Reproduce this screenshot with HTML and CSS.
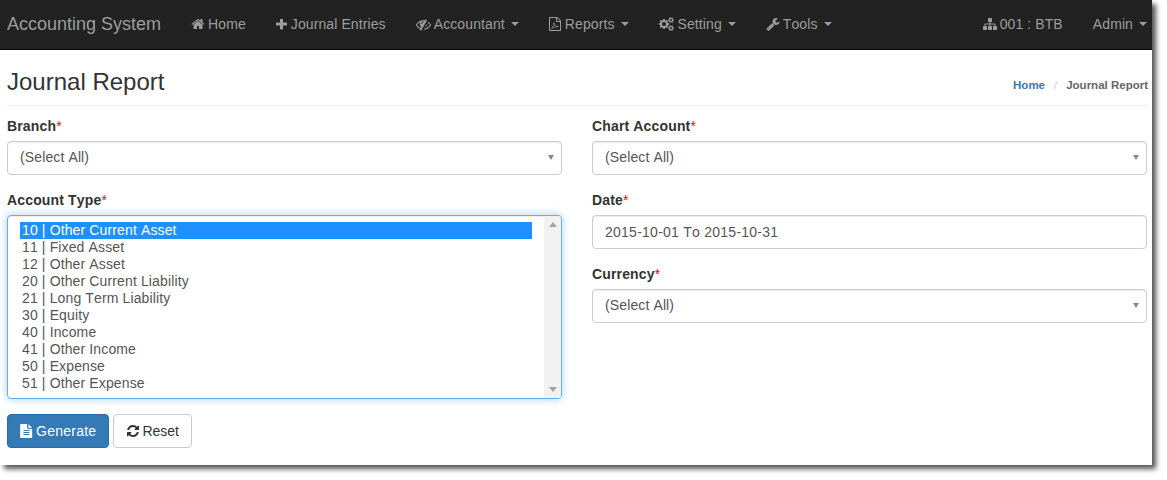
FILE: index.html
```html
<!DOCTYPE html>
<html lang="en">
<head>
    <meta charset="UTF-8">
    <title>Journal Report</title>
    <link rel="stylesheet" href="styles.css">
</head>
<body>
<div class="window">
    <nav class="navbar">
        <a class="brand" href="#">Accounting System</a>
        <ul class="nav">
            <li><a href="#"><svg class="fa" viewBox="0 0 1792 1792"><path d="M1472 992v480q0 26-19 45t-45 19h-384v-384h-256v384h-384q-26 0-45-19t-19-45v-480q0-1 .5-3t.5-3l575-474 575 474q1 2 1 6zm223-69l-62 74q-8 9-21 11h-3q-13 0-21-7l-692-577-692 577q-12 8-24 7-13-2-21-11l-62-74q-8-10-7-23.5t11-21.5l719-599q32-26 76-26t76 26l244 204v-195q0-14 9-23t23-9h192q14 0 23 9t9 23v408l219 182q10 8 11 21.5t-7 23.5z"/></svg>Home</a></li>
            <li><a href="#"><svg class="fa fa-plus" viewBox="192 192 1408 1408"><path d="M1600 736v192q0 40-28 68t-68 28h-416v416q0 40-28 68t-68 28h-192q-40 0-68-28t-28-68v-416h-416q-40 0-68-28t-28-68v-192q0-40 28-68t68-28h416v-416q0-40 28-68t68-28h192q40 0 68 28t28 68v416h416q40 0 68 28t28 68z"/></svg>Journal Entries</a></li>
            <li><a href="#"><svg class="fa fa-eye" viewBox="0 0 1792 1792"><path d="M555 1335l78-141q-87-63-136-159t-49-203q0-121 61-225-229 117-381 353 167 258 427 375zm389-759q0-20-14-34t-34-14q-125 0-214.5 89.5t-89.5 214.5q0 20 14 34t34 14 34-14 14-34q0-86 61-147t147-61q20 0 34-14t14-34zm363-191q0 7-1 9-106 189-316 567t-315 566l-49 89q-10 16-28 16-12 0-134-70-16-10-16-28 0-12 44-87-143-65-263.5-173t-208.5-245q-20-31-20-69t20-69q153-235 380-371t496-136q89 0 180 17l54-97q10-16 28-16 5 0 18 6t31 15.5 33 18.5 31.5 18.5 19.5 11.5q16 10 16 27zm37 447q0 139-79 253.5t-209 164.5l280-502q8 45 8 84zm448 128q0 35-20 69-39 64-109 145-150 172-347.5 267t-419.5 95l74-132q212-18 392.5-137t301.5-307q-115-179-282-294l63-112q95 64 182.5 153t144.5 184q20 34 20 69z"/></svg>Accountant<span class="caret"></span></a></li>
            <li><a href="#"><svg class="fa fa-file" viewBox="128 0 1536 1792"><path d="M1596 380q28 28 48 76t20 88v1152q0 40-28 68t-68 28h-1344q-40 0-68-28t-28-68v-1600q0-40 28-68t68-28h896q40 0 88 20t76 48zm-444-244v376h376q-10-29-22-41l-313-313q-12-12-41-22zm384 1528v-1024h-416q-40 0-68-28t-28-68v-416h-768v1536h1280z"/><path class="pdf-mark" d="M420 1500c160-90 300-400 360-800 30 300 220 480 540 520-260-20-560 60-900 280z"/></svg>Reports<span class="caret"></span></a></li>
            <li><a href="#"><svg class="fa fa-cogs" viewBox="0 0 2048 1792"><path d="M896 896q0-106-75-181t-181-75-181 75-75 181 75 181 181 75 181-75 75-181zm768 512q0-52-38-90t-90-38-90 38-38 90q0 53 37.5 90.5t90.5 37.5 90.5-37.5 37.5-90.5zm0-1024q0-52-38-90t-90-38-90 38-38 90q0 53 37.5 90.5t90.5 37.5 90.5-37.5 37.5-90.5zm-384 421v185q0 10-7 19.5t-16 10.5l-155 24q-11 35-32 76 34 48 90 115 7 11 7 20 0 12-7 19-23 30-82.5 89.5t-78.5 59.5q-11 0-21-7l-115-90q-37 19-77 31-11 108-23 155-7 24-30 24h-186q-11 0-20-7.5t-10-17.5l-23-153q-34-10-75-31l-118 89q-7 7-20 7-11 0-21-8-144-133-144-160 0-9 7-19 10-14 41-53t47-61q-23-44-35-82l-152-24q-10-1-17-9.5t-7-19.5v-185q0-10 7-19.5t16-10.5l155-24q11-35 32-76-34-48-90-115-7-11-7-20 0-12 7-20 22-30 82-89t79-59q11 0 21 7l115 90q34-18 77-32 11-108 23-154 7-24 30-24h186q11 0 20 7.5t10 17.5l23 153q34 10 75 31l118-89q8-7 20-7 11 0 21 8 144 133 144 160 0 8-7 19-12 16-42 54t-45 60q23 48 34 82l152 23q10 2 17 10.5t7 19.5zm640 533v140q0 16-149 31-12 27-30 52 51 113 51 138 0 4-4 7-122 71-124 71-8 0-46-47t-52-68q-20 2-30 2t-30-2q-14 21-52 68t-46 47q-2 0-124-71-4-3-4-7 0-25 51-138-18-25-30-52-149-15-149-31v-140q0-16 149-31 13-29 30-52-51-113-51-138 0-4 4-7 4-2 35-20t59-34 30-16q8 0 46 46.5t52 67.5q20-2 30-2t30 2q51-71 92-112l6-2q4 0 124 70 4 3 4 7 0 25-51 138 17 23 30 52 149 15 149 31zm0-1024v140q0 16-149 31-12 27-30 52 51 113 51 138 0 4-4 7-122 71-124 71-8 0-46-47t-52-68q-20 2-30 2t-30-2q-14 21-52 68t-46 47q-2 0-124-71-4-3-4-7 0-25 51-138-18-25-30-52-149-15-149-31v-140q0-16 149-31 13-29 30-52-51-113-51-138 0-4 4-7 4-2 35-20t59-34 30-16q8 0 46 46.5t52 67.5q20-2 30-2t30 2q51-71 92-112l6-2q4 0 124 70 4 3 4 7 0 25-51 138 17 23 30 52 149 15 149 31z"/></svg>Setting<span class="caret"></span></a></li>
            <li><a href="#"><svg class="fa" viewBox="0 0 1792 1792"><path d="M448 1472q0-26-19-45t-45-19-45 19-19 45 19 45 45 19 45-19 19-45zm644-420l-682 682q-37 37-90 37-52 0-91-37l-106-108q-38-36-38-90 0-53 38-91l681-681q39 98 114.5 173.5t173.5 114.5zm634-435q0 39-23 106-47 134-164.5 217.5t-258.5 83.5q-185 0-316.5-131.5t-131.5-316.5 131.5-316.5 316.5-131.5q58 0 121.5 16.5t107.5 46.5q16 11 16 28t-16 28l-293 169v224l193 107q5-3 79-48.5t135.5-81 70.5-35.5q15 0 23.5 10t8.5 25z"/></svg>Tools<span class="caret"></span></a></li>
        </ul>
        <ul class="nav nav-right">
            <li><a href="#"><svg class="fa fa-sitemap" viewBox="0 0 1792 1792"><path d="M1792 1248v320q0 40-28 68t-68 28h-320q-40 0-68-28t-28-68v-320q0-40 28-68t68-28h96v-192h-512v192h96q40 0 68 28t28 68v320q0 40-28 68t-68 28h-320q-40 0-68-28t-28-68v-320q0-40 28-68t68-28h96v-192h-512v192h96q40 0 68 28t28 68v320q0 40-28 68t-68 28h-320q-40 0-68-28t-28-68v-320q0-40 28-68t68-28h96v-192q0-52 38-90t90-38h512v-192h-96q-40 0-68-28t-28-68v-320q0-40 28-68t68-28h320q40 0 68 28t28 68v320q0 40-28 68t-68 28h-96v192h512q52 0 90 38t38 90v192h96q40 0 68 28t28 68z"/></svg>001 : BTB</a></li>
            <li><a href="#">Admin<span class="caret"></span></a></li>
        </ul>
    </nav>

    <main class="content">
        <div class="page-header">
            <h1>Journal Report</h1>
            <div class="breadcrumb"><a href="#">Home</a><span class="sep">/</span><span>Journal Report</span></div>
        </div>

        <form class="form-grid">
            <div class="col">
                <div class="form-group">
                    <label>Branch<span class="req">*</span></label>
                    <div class="form-control select">(Select All)</div>
                </div>
                <div class="form-group">
                    <label>Account Type<span class="req">*</span></label>
                    <div class="listbox">
                        <ul class="options">
                            <li class="selected">10 | Other Current Asset</li>
                            <li>11 | Fixed Asset</li>
                            <li>12 | Other Asset</li>
                            <li>20 | Other Current Liability</li>
                            <li>21 | Long Term Liability</li>
                            <li>30 | Equity</li>
                            <li>40 | Income</li>
                            <li>41 | Other Income</li>
                            <li>50 | Expense</li>
                            <li>51 | Other Expense</li>
                        </ul>
                        <div class="scrollbar"><span class="arrow-up"></span><span class="arrow-down"></span></div>
                    </div>
                </div>
                <div class="buttons">
                    <button type="button" class="btn btn-primary"><svg class="fa" viewBox="256 0 1280 1792"><path d="M1596 476q14 14 28 36h-472v-472q22 14 36 28zm-476 164h500v1056q0 40-28 68t-68 28h-1344q-40 0-68-28t-28-68v-1600q0-40 28-68t68-28h800v500q0 40 28 68t68 28zm160 736v-64q0-14-9-23t-23-9h-704q-14 0-23 9t-9 23v64q0 14 9 23t23 9h704q14 0 23-9t9-23zm0-256v-64q0-14-9-23t-23-9h-704q-14 0-23 9t-9 23v64q0 14 9 23t23 9h704q14 0 23-9t9-23zm0-256v-64q0-14-9-23t-23-9h-704q-14 0-23 9t-9 23v64q0 14 9 23t23 9h704q14 0 23-9t9-23z"/></svg>Generate</button>
                    <button type="button" class="btn btn-default"><svg class="fa" viewBox="0 0 1792 1792"><path d="M1639 1056q0 5-1 7-64 268-268 434.5t-478 166.5q-146 0-282.5-55t-243.5-157l-129 129q-19 19-45 19t-45-19-19-45v-448q0-26 19-45t45-19h448q26 0 45 19t19 45-19 45l-137 137q71 66 161 102t187 36q134 0 250-65t186-179q11-17 53-117 8-23 30-23h192q13 0 22.5 9.5t9.5 22.5zm25-800v448q0 26-19 45t-45 19h-448q-26 0-45-19t-19-45 19-45l138-138q-148-137-349-137-134 0-250 65t-186 179q-11 17-53 117-8 23-30 23h-199q-13 0-22.5-9.5t-9.5-22.5v-7q65-268 270-434.5t480-166.5q146 0 284 55.5t245 156.5l130-129q19-19 45-19t45 19 19 45z"/></svg>Reset</button>
                </div>
            </div>
            <div class="col">
                <div class="form-group">
                    <label>Chart Account<span class="req">*</span></label>
                    <div class="form-control select">(Select All)</div>
                </div>
                <div class="form-group">
                    <label>Date<span class="req">*</span></label>
                    <div class="form-control">2015-10-01 To 2015-10-31</div>
                </div>
                <div class="form-group">
                    <label>Currency<span class="req">*</span></label>
                    <div class="form-control select">(Select All)</div>
                </div>
            </div>
        </form>
    </main>
</div>
</body>
</html>
```

FILE: styles.css
```css
* {
    margin: 0;
    padding: 0;
    box-sizing: border-box;
}
body {
    min-height: 480px;
    font-family: "Liberation Sans", Arial, sans-serif;
    font-size: 14px;
    line-height: 20px;
    font-kerning: none;
    color: #333;
    background-color: #fff;
}
a {
    text-decoration: none;
}
ul {
    list-style: none;
}
.window {
    width: 1152px;
    height: 465px;
    background-color: #fff;
    box-shadow: 4px 4px 5px #555;
}

/* navbar */
.navbar {
    display: flex;
    height: 50px;
    padding: 0 5px 0 7px;
    background-color: #222;
    border-bottom: 1px solid #080808;
}
.brand {
    font-size: 18px;
    line-height: 48px;
    color: #9d9d9d;
    margin-right: 15px;
}
.nav {
    display: flex;
    letter-spacing: .1px;
}
.nav-right {
    margin-left: auto;
}
.nav a {
    display: flex;
    align-items: center;
    height: 48px;
    padding: 0 15px;
    color: #9d9d9d;
}
.nav-right li:last-child a {
    padding-right: 0;
}
.fa {
    width: 14px;
    height: 14px;
    margin-right: 3px;
    fill: currentColor;
    flex: none;
}
.fa-plus {
    width: 11px;
    height: 11px;
    margin-left: 0;
    margin-right: 4px;
}
.fa-eye {
    width: 15px;
    height: 15px;
}
.fa-file {
    width: 12px;
    margin-right: 4px;
}
.fa-cogs {
    width: 16px;
}
.pdf-mark {
    fill: none;
    stroke: currentColor;
    stroke-width: 90;
}
.caret {
    width: 0;
    height: 0;
    margin-left: 6px;
    border-top: 4px solid;
    border-left: 4px solid transparent;
    border-right: 4px solid transparent;
}

/* page header */
.content {
    padding: 0 5px 0 7px;
}
.page-header {
    display: flex;
    justify-content: space-between;
    align-items: flex-end;
    padding: 19px 0 10px;
    margin-bottom: 10px;
    border-bottom: 1px solid #eee;
}
h1 {
    font-size: 24px;
    font-weight: 400;
    line-height: 26px;
}
.breadcrumb {
    margin-right: -1px;
    font-size: 11.5px;
    font-weight: 700;
    color: #666;
}
.breadcrumb a {
    color: #337ab7;
}
.sep {
    margin: 0 9px;
    font-weight: 400;
    color: #ccc;
}

/* form */
.form-grid {
    display: grid;
    grid-template-columns: 555px 555px;
    column-gap: 30px;
}
.form-group {
    margin-bottom: 15px;
}
label {
    display: block;
    margin-bottom: 5px;
    font-weight: 700;
    letter-spacing: .15px;
}
.req {
    font-weight: 400;
    color: red;
}
.form-control {
    position: relative;
    height: 34px;
    padding: 6px 12px;
    color: #555;
    letter-spacing: .25px;
    background-color: #fff;
    border: 1px solid #ccc;
    border-radius: 4px;
    box-shadow: inset 0 1px 1px rgba(0, 0, 0, .075);
}
.select {
    padding-top: 5px;
    letter-spacing: .12px;
}
.select::after {
    content: "";
    position: absolute;
    top: 13px;
    right: 7px;
    border-top: 5px solid #888;
    border-left: 3px solid transparent;
    border-right: 3px solid transparent;
}
.listbox {
    display: flex;
    height: 184px;
    background-color: #fff;
    border: 1px solid #66afe9;
    border-radius: 4px;
    box-shadow: inset 0 1px 1px rgba(0, 0, 0, .075), 0 0 8px rgba(102, 175, 233, .6);
}
.options {
    flex: 1;
    padding: 6px 12px;
    color: #555;
    line-height: 17px;
    letter-spacing: .13px;
}
.options li {
    padding: 0 2px;
}
.options .selected {
    color: #fff;
    background-color: #1e90ff;
}
.scrollbar {
    display: flex;
    flex-direction: column;
    justify-content: space-between;
    align-items: center;
    width: 17px;
    padding: 6px 0;
    background-color: #f1f1f1;
    border-radius: 0 3px 3px 0;
}
.arrow-up {
    border-bottom: 5px solid #a3a3a3;
    border-left: 4px solid transparent;
    border-right: 4px solid transparent;
}
.arrow-down {
    border-top: 5px solid #a3a3a3;
    border-left: 4px solid transparent;
    border-right: 4px solid transparent;
}
.buttons {
    display: flex;
    gap: 4px;
}
.btn {
    display: flex;
    align-items: center;
    height: 34px;
    padding: 0 12px;
    font: inherit;
    border: 1px solid transparent;
    border-radius: 4px;
}
.btn .fa {
    margin-right: 3px;
}
.btn-primary .fa {
    width: 13px;
}
.btn-default .fa {
    margin-right: 2px;
}
.btn-primary {
    color: #fff;
    letter-spacing: .25px;
    background-color: #337ab7;
    border-color: #2e6da4;
}
.btn-default {
    color: #333;
    background-color: #fff;
    border-color: #ccc;
}
```
